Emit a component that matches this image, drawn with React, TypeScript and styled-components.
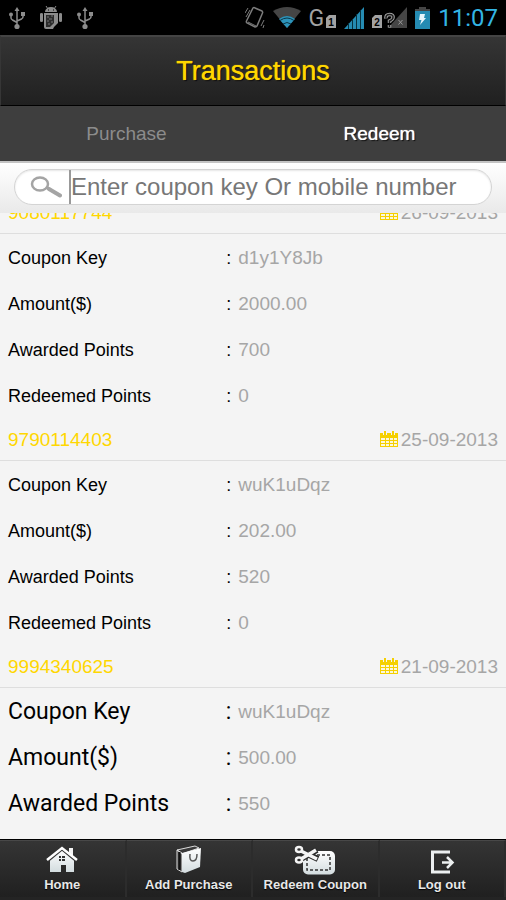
import React, { useLayoutEffect, useRef, useState } from "react";
import styled, { createGlobalStyle } from "styled-components";

const sans = `"Liberation Sans", Arial, sans-serif`;
const roboto = `Roboto, "Noto Sans", sans-serif`;

const GlobalStyle = createGlobalStyle`
  *, *::before, *::after { box-sizing: border-box; }
  body { margin: 0; background: #000; }
`;

const Screen = styled.div`
  display: flex;
  flex-direction: column;
  height: 100vh;
  background: #f4f4f4;
  font-family: ${sans};
`;

const StatusBar = styled.div`
  display: flex;
  align-items: center;
  justify-content: space-between;
  flex: none;
  height: 35px;
  padding: 0 8px;
  background: #000;
`;

const StatusGroup = styled.div<{ $gap: number }>`
  display: flex;
  align-items: center;
  gap: ${(p) => p.$gap}px;
`;

const Clock = styled.time`
  color: #33b5e5;
  font: 24px/32px ${roboto};
`;

const Network = styled.span`
  display: flex;
  align-items: flex-end;
  gap: 2px;
  height: 20px;
`;

const NetworkType = styled.span`
  color: #a2a2a2;
  font: 23px/18px ${roboto};
`;

const TitleBar = styled.header`
  display: flex;
  align-items: center;
  justify-content: center;
  flex: none;
  height: 71px;
  border: 1px solid #363636;
  border-top: 2px solid #444;
  border-bottom: 1px solid #000;
  background: linear-gradient(#353535, #202020);
`;

const Title = styled.h1`
  margin: 0;
  color: #ffd700;
  font: 27px/40px ${sans};
  text-shadow: 0 0 1px #ffd700, 1px 1px 1px #001;
`;

const Tabs = styled.nav`
  display: grid;
  grid-template-columns: 1fr 1fr;
  flex: none;
  height: 55px;
  background: #3e3e3e;
`;

const Tab = styled.button<{ $active?: boolean }>`
  border: 0;
  padding: 0;
  background: none;
  color: ${(p) => (p.$active ? "#fff" : "#8c8c8c")};
  font: 19px/28px ${sans};
  text-shadow: ${(p) => (p.$active ? "0 0 1px #fff, 1px 1px 1px #000" : "none")};
`;

const SearchBar = styled.div`
  flex: none;
  padding: 6px 14px 8px;
  border-top: 2px solid #c4c4c4;
  background: linear-gradient(#fff, #e9e9e9);
`;

const SearchField = styled.label`
  display: flex;
  align-items: center;
  height: 36px;
  padding-left: 15px;
  border: 1px solid #d4d4d4;
  border-radius: 18px;
  background: #fff;
  box-shadow: inset 0 1px 2px #e6e6e6;
`;

const SearchInput = styled.input`
  flex: 1;
  min-width: 0;
  height: 34px;
  margin-left: 7px;
  padding: 0;
  border: 0;
  border-left: 2px solid #999;
  outline: 0;
  background: none;
  color: #333;
  font: 24px/34px ${sans};
  &::placeholder { color: #777; opacity: 1; }
`;

const List = styled.main`
  flex: 1;
  min-height: 0;
  overflow-y: auto;
  padding-bottom: 12px;
  scrollbar-width: none;
`;

const GroupHead = styled.div`
  display: flex;
  align-items: center;
  justify-content: space-between;
  height: 42px;
  margin-bottom: 1px;
  padding: 0 8px;
  border-bottom: 1px solid #dedede;
  font-size: 19px;
  line-height: 28px;
`;

const Phone = styled.a`
  color: #ffd700;
  text-decoration: none;
`;

const DateTag = styled.span`
  display: flex;
  align-items: center;
  gap: 3px;
  color: #a6a6a6;
`;

const Rows = styled.dl`
  margin: 0;
`;

const Row = styled.div`
  display: flex;
  align-items: center;
  height: 46px;
  padding: 0 8px;
  line-height: 28px;
`;

const Label = styled.dt<{ $roboto?: boolean }>`
  display: flex;
  justify-content: space-between;
  width: 47%;
  padding-right: 7px;
  color: #000;
  font-family: ${(p) => (p.$roboto ? roboto : sans)};
  font-size: ${(p) => (p.$roboto ? 23 : 18)}px;
`;

const Value = styled.dd`
  margin: 0;
  color: #a6a6a6;
  font-size: 19px;
`;

const Footer = styled.nav`
  display: grid;
  grid-template-columns: repeat(4, 1fr);
  flex: none;
  height: 61px;
  border-top: 1px solid #000;
  border-bottom: 3px solid #242424;
  background: linear-gradient(#353535, #202020);
`;

const FooterButton = styled.button`
  display: flex;
  flex-direction: column;
  align-items: center;
  gap: 2px;
  padding: 4px 0 0;
  border: 0;
  border-top: 1px solid #484848;
  border-right: 2px solid #2c2c2c;
  background: none;
  color: #e8e8e8;
  font: bold 13px/16px ${sans};
  text-shadow: 0 1px 1px #000;
  white-space: nowrap;
`;

const Usb = () => (
  <svg width="18" height="24" viewBox="0 0 18 24" fill="none" stroke="#8c8c8c" strokeWidth="1.500">
    <path d="M9 21V4M3 9v3q0 1 1.500 2L9 16.500M15 8v3q0 1-1.500 2L9 15" />
    <path d="M9 1l2.500 4h-5z M13 6h4v4h-4z" fill="#8c8c8c" stroke="none" />
    <circle cx="3" cy="8.500" r="2" fill="#8c8c8c" stroke="none" />
    <circle cx="9" cy="20.500" r="2.600" fill="#8c8c8c" stroke="none" />
  </svg>
);

const Droid = () => (
  <svg width="22" height="25" viewBox="0 0 22 25" fill="#8c8c8c">
    <path d="M5 7a6 5 0 0 1 12 0zM0 9q0-1 1.500-1T3 9v7q0 1-1.500 1T0 16zM19 9q0-1 1.500-1T22 9v7q0 1-1.500 1T19 16z" />
    <path d="M4 8h14v10l-4 4-1 2H6q-2 0-2-2z" />
    <path d="M6 1l2 3M16 1l-2 3" stroke="#8c8c8c" />
    <path d="M6 10h8v8l-4 4H6z" fill="#2c2c2c" />
    <path d="M7 12h2M11 11h2M9 14h3M7 16h2M11 17h2M8 19h2" stroke="#777" />
    <path d="M8 5h1M13 5h1" stroke="#000" />
  </svg>
);

const Rotate = () => (
  <svg width="20" height="24" viewBox="0 0 20 24" fill="none" stroke="#7c7c7c">
    <path d="M8 2q1-1 2 0l7 3q1 1 .5 2L12 20q-1 1-2 1l-8-4q-1-1-.5-2z" strokeWidth="1.500" />
    <path d="M1 11l4-7M0 7l3-5M16 20l3-6M18 22l1-3M3 16l8 4" />
  </svg>
);

const Wifi = () => (
  <svg width="28" height="21" viewBox="0 0 28 21">
    <path d="M0 4Q14-4 28 4L14 21z" fill="#454545" />
    <path d="M6 12Q14 6 22 12L14 21z" fill="#2c94bb" />
    <path d="M7 13.500q7-5 14 0M10 17q4-3 8 0" fill="none" stroke="#0b3445" />
  </svg>
);

const SimCard = ({ label }: { label: string }) => (
  <svg width="10" height="13" viewBox="0 0 10 13">
    <path d="M0 3l3-3h7v13H0z" fill="#a2a2a2" />
    <text x="5" y="11" textAnchor="middle" fontFamily="Liberation Sans" fontWeight="bold" fontSize="10" fill="#000">{label}</text>
  </svg>
);

const Signal = () => (
  <svg width="20" height="22" viewBox="0 0 20 22">
    <path d="M0 22L20 0v22z" fill="#258bb2" />
    <path d="M4.500 16v6M8.500 12v10M12.500 7v15M16.500 3v19" stroke="#07313f" />
  </svg>
);

const NoSignal = () => (
  <svg width="23" height="22" viewBox="0 0 23 22">
    <path d="M4 22L23 1v21z" fill="#454545" />
    <path d="M14.500 14l4 4.500M18.500 14l-4 4.500" stroke="#999" />
    <path d="M2 12.500q-.5-4 3.500-4t3.500 3q0 2-3.500 3.500v2M5.500 19v2.500" fill="none" stroke="#a2a2a2" strokeWidth="3.500" />
    <path d="M2 12.500q-.5-4 3.500-4t3.500 3q0 2-3.500 3.500v2M5.500 19v2" fill="none" stroke="#1c1c1c" strokeWidth="1.500" />
  </svg>
);

const Battery = () => (
  <svg width="15" height="22" viewBox="0 0 15 22">
    <path d="M4 0h7v2h4v20H0V2h4z" fill="#258bb2" />
    <path d="M4 0h7v2h4v2H0V2h4z" fill="#454545" />
    <path d="M5 7h5l-1 4h2l-6 7 1.500-5H4z" fill="#e8f6fb" />
  </svg>
);

const Magnifier = () => (
  <svg width="32" height="24" viewBox="0 0 32 24" fill="none" stroke="#a4a4a4">
    <ellipse cx="10" cy="9" rx="8" ry="6.500" strokeWidth="2.500" />
    <path d="M17 12.500l3 2" strokeWidth="3" />
    <path d="M19 14l11 6.500" strokeWidth="4" strokeLinecap="round" />
  </svg>
);

const Calendar = () => (
  <svg width="18" height="17" viewBox="0 0 18 17">
    <path d="M0 2h18v14H0z" fill="#f5d000" />
    <path d="M1 7h16v8H1z" fill="#fbf7dc" />
    <path d="M1 9.500h16M1 12.500h16M5.500 7v8M9.500 7v8M13.500 7v8" stroke="#f5d000" />
    <path d="M3 1h4v3H3zM11 1h4v3h-4z" fill="#f4f4f4" />
    <path d="M5 0v4M13 0v4" stroke="#f5d000" strokeWidth="2" />
  </svg>
);

const Silver = ({ id }: { id: string }) => (
  <linearGradient id={id} x1="0" y1="0" x2="0" y2="1">
    <stop offset="0" stopColor="#fff" />
    <stop offset="1" stopColor="#d3dcdf" />
  </linearGradient>
);

const HomeIcon = () => (
  <svg width="32" height="30" viewBox="0 0 32 30">
    <defs><Silver id="home" /></defs>
    <path d="M23 9V3h4v9z" fill="#f4f4f4" />
    <path d="M4 15L16 4l12 11v12h-8v-7h-5v7H4z" fill="url(#home)" />
    <path d="M2 16.500L16 5l14 11.500" fill="none" stroke="#333" strokeWidth="1.500" />
    <path d="M1 15L16 3l15 12" fill="none" stroke="#fff" strokeWidth="2.500" />
    <path d="M13 11h2v2h-2zM16 11h3v2h-3zM13 14h2v2h-2zM16 14h3v2h-3z" fill="#333" />
  </svg>
);

const BagIcon = () => (
  <svg width="28" height="30" viewBox="0 0 28 30">
    <defs><Silver id="bag" /></defs>
    <path d="M2 5l18-4 4 2-17 6zM2 5l5 3v19l-5-3z" fill="#3a3a3a" stroke="#ddd" />
    <path d="M4.500 7v18" stroke="#111" strokeWidth="2" />
    <path d="M7 8l19-5-1 19-15 6-3-1z" fill="url(#bag)" />
    <path d="M15 9q-1 7 3 7t4-7" fill="none" stroke="#555" strokeWidth="1.500" />
  </svg>
);

const CouponIcon = () => (
  <svg width="42" height="30" viewBox="0 0 42 30">
    <defs><Silver id="coupon" /></defs>
    <rect x="9" y="6" width="32" height="23.500" rx="5" fill="url(#coupon)" />
    <rect x="13" y="10" width="23" height="15" fill="none" stroke="#333" strokeWidth="1.500" strokeDasharray="3 2" />
    <path d="M7 6l17 8M7 14l16-9" stroke="#2a2a2a" strokeWidth="6" />
    <g stroke="#f4f4f4" fill="none">
      <path d="M7 6l16 8M7 14l15-9" strokeWidth="3.500" />
      <ellipse cx="5" cy="4.500" rx="3" ry="2.500" strokeWidth="2.500" />
      <ellipse cx="5" cy="15" rx="3" ry="2.500" strokeWidth="2.500" />
    </g>
  </svg>
);

const LogoutIcon = () => (
  <svg width="26" height="30" viewBox="0 0 26 30" fill="none" stroke="#eceff0">
    <path d="M21 7H3.500v20H21" strokeWidth="3" />
    <path d="M13 17.500h10M18 12l5.500 5.500L18 23" strokeWidth="2.500" />
  </svg>
);

type Transaction = {
  phone: string;
  date: string;
  fields: [string, string][];
  roboto?: boolean;
};

const transactions: Transaction[] = [
  {
    phone: "9080117744",
    date: "26-09-2013",
    fields: [["Coupon Key", "d1y1Y8Jb"], ["Amount($)", "2000.00"], ["Awarded Points", "700"], ["Redeemed Points", "0"]],
  },
  {
    phone: "9790114403",
    date: "25-09-2013",
    fields: [["Coupon Key", "wuK1uDqz"], ["Amount($)", "202.00"], ["Awarded Points", "520"], ["Redeemed Points", "0"]],
  },
  {
    phone: "9994340625",
    date: "21-09-2013",
    fields: [["Coupon Key", "wuK1uDqz"], ["Amount($)", "500.00"], ["Awarded Points", "550"]],
    roboto: true,
  },
];

const tabs = ["Purchase", "Redeem"];

const actions = [
  { label: "Home", Icon: HomeIcon },
  { label: "Add Purchase", Icon: BagIcon },
  { label: "Redeem Coupon", Icon: CouponIcon },
  { label: "Log out", Icon: LogoutIcon },
];

export default function App() {
  const list = useRef<HTMLElement>(null);
  const [tab, setTab] = useState("Redeem");

  // The list opens scrolled to its last entry.
  useLayoutEffect(() => {
    if (list.current) list.current.scrollTop = list.current.scrollHeight;
  }, []);

  return (
    <Screen>
      <GlobalStyle />
      <StatusBar>
        <StatusGroup $gap={14}>
          <Usb />
          <Droid />
          <Usb />
        </StatusGroup>
        <StatusGroup $gap={8}>
          <Rotate />
          <Wifi />
          <Network>
            <NetworkType>G</NetworkType>
            <SimCard label="1" />
          </Network>
          <Signal />
          <Network>
            <SimCard label="2" />
            <NoSignal />
          </Network>
          <Battery />
          <Clock>11:07</Clock>
        </StatusGroup>
      </StatusBar>
      <TitleBar>
        <Title>Transactions</Title>
      </TitleBar>
      <Tabs>
        {tabs.map((name) => (
          <Tab key={name} $active={name === tab} onClick={() => setTab(name)}>{name}</Tab>
        ))}
      </Tabs>
      <SearchBar>
        <SearchField>
          <Magnifier />
          <SearchInput type="text" aria-label="Search" placeholder="Enter coupon key Or mobile number" />
        </SearchField>
      </SearchBar>
      <List ref={list}>
        {transactions.map((t) => (
          <section key={t.phone}>
            <GroupHead>
              <Phone href={`tel:${t.phone}`}>{t.phone}</Phone>
              <DateTag>
                <Calendar />
                {t.date}
              </DateTag>
            </GroupHead>
            <Rows>
              {t.fields.map(([label, value]) => (
                <Row key={label}>
                  <Label $roboto={t.roboto}>
                    <span>{label}</span>
                    <span>:</span>
                  </Label>
                  <Value>{value}</Value>
                </Row>
              ))}
            </Rows>
          </section>
        ))}
      </List>
      <Footer>
        {actions.map(({ label, Icon }) => (
          <FooterButton key={label}>
            <Icon />
            {label}
          </FooterButton>
        ))}
      </Footer>
    </Screen>
  );
}
